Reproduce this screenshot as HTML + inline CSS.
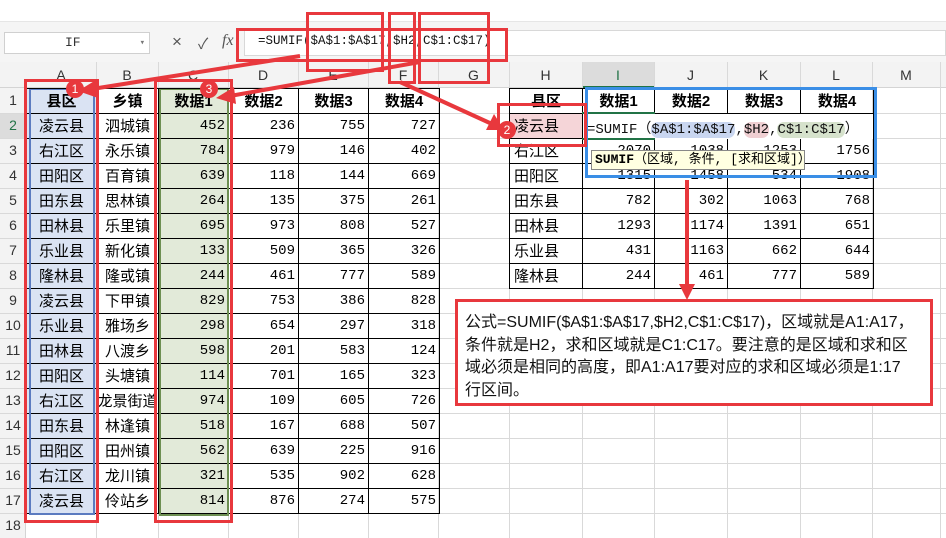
<!DOCTYPE html>
<html><head><meta charset="utf-8"><style>
*{margin:0;padding:0;box-sizing:border-box}
body{width:946px;height:538px;overflow:hidden;background:#fff;position:relative;font-family:"Liberation Sans","Noto Sans CJK SC",sans-serif}
.abs{position:absolute}
.vl{position:absolute;top:62px;bottom:0;width:1px;background:#d9d9d9}
.hl{position:absolute;left:0;right:0;height:1px;background:#d9d9d9}
table{border-collapse:collapse;position:absolute;table-layout:fixed}
td{border:1px solid #000;height:25px;font-size:15px;padding:0 4px;white-space:nowrap;overflow:hidden;line-height:23px}
td.n{text-align:right;font-family:"Liberation Mono","Noto Sans CJK SC",monospace;font-size:14px;padding-right:3px}
td.h{font-weight:bold;text-align:center;font-size:15px}
td.c{text-align:center}
.ba{background:#dae3f3}.gc{background:#e2ead9}
.rh{position:absolute;left:0;width:26px;text-align:center;font-size:14px;color:#333;height:25px;line-height:25px}
.ch{position:absolute;top:62px;height:26px;line-height:26px;text-align:center;font-size:14px;color:#333}
.rb{position:absolute;border:3px solid #e8383d}
.badge{position:absolute;width:18px;height:18px;border-radius:50%;background:#e8383d;color:#fff;font-size:12px;text-align:center;line-height:18px}
</style></head><body>
<div class="abs" style="left:0;top:0;width:946px;height:22px;background:#fff;border-bottom:1px solid #e6e6e6"></div>
<div class="abs" style="left:0;top:22px;width:946px;height:40px;background:#f5f5f5"></div>
<div class="abs" style="left:4px;top:32px;width:146px;height:22px;background:#fff;border:1px solid #d0d0d0;font-family:'Liberation Mono',monospace;font-size:13px;line-height:20px;padding-left:60px;color:#333">IF<span style="position:absolute;right:4px;font-size:9px;color:#777">▾</span></div>
<div class="abs" style="left:172px;top:32px;font-size:17px;color:#555">×</div>
<div class="abs" style="left:198px;top:33px;font-size:15px;color:#555">✓</div>
<div class="abs" style="left:222px;top:32px;font-size:16px;color:#555;font-style:italic;font-family:'Liberation Serif',serif">fx</div>
<div class="abs" style="left:244px;top:30px;width:702px;height:26px;background:#fff;border:1px solid #d8d8d8"></div>
<div class="abs" style="left:258px;top:34px;font-family:'Liberation Mono',monospace;font-size:12.5px;color:#111">=SUMIF($A$1:$A$17,$H2,C$1:C$17)</div>
<div class="abs" style="left:0;top:62px;width:946px;height:26px;background:#f3f3f3;border-bottom:1px solid #d4d4d4"></div>
<div class="abs" style="left:0;top:88px;width:26px;height:450px;background:#f3f3f3;border-right:1px solid #d4d4d4"></div>
<div class="abs" style="left:582px;top:62px;width:72px;height:26px;background:#dcdcdc;border-bottom:2px solid #217346"></div>
<div class="abs" style="left:0;top:114px;width:26px;height:25px;background:#dcdcdc"></div>
<div class="ch" style="left:26px;width:70px">A</div><div class="ch" style="left:96px;width:62px">B</div><div class="ch" style="left:158px;width:70px">C</div><div class="ch" style="left:228px;width:70px">D</div><div class="ch" style="left:298px;width:70px">E</div><div class="ch" style="left:368px;width:70px">F</div><div class="ch" style="left:438px;width:71px">G</div><div class="ch" style="left:509px;width:73px">H</div><div class="ch" style="left:582px;width:72px;color:#217346">I</div><div class="ch" style="left:654px;width:73px">J</div><div class="ch" style="left:727px;width:73px">K</div><div class="ch" style="left:800px;width:72px">L</div><div class="ch" style="left:872px;width:68px">M</div>
<div class="vl" style="left:96px"></div><div class="vl" style="left:158px"></div><div class="vl" style="left:228px"></div><div class="vl" style="left:298px"></div><div class="vl" style="left:368px"></div><div class="vl" style="left:438px"></div><div class="vl" style="left:509px"></div><div class="vl" style="left:582px"></div><div class="vl" style="left:654px"></div><div class="vl" style="left:727px"></div><div class="vl" style="left:800px"></div><div class="vl" style="left:872px"></div><div class="vl" style="left:940px"></div>
<div class="hl" style="top:113px"></div><div class="hl" style="top:138px"></div><div class="hl" style="top:163px"></div><div class="hl" style="top:188px"></div><div class="hl" style="top:213px"></div><div class="hl" style="top:238px"></div><div class="hl" style="top:263px"></div><div class="hl" style="top:288px"></div><div class="hl" style="top:313px"></div><div class="hl" style="top:338px"></div><div class="hl" style="top:363px"></div><div class="hl" style="top:388px"></div><div class="hl" style="top:413px"></div><div class="hl" style="top:438px"></div><div class="hl" style="top:463px"></div><div class="hl" style="top:488px"></div><div class="hl" style="top:513px"></div>
<div class="rh" style="top:88px">1</div><div class="rh" style="top:113px;color:#217346">2</div><div class="rh" style="top:138px">3</div><div class="rh" style="top:163px">4</div><div class="rh" style="top:188px">5</div><div class="rh" style="top:213px">6</div><div class="rh" style="top:238px">7</div><div class="rh" style="top:263px">8</div><div class="rh" style="top:288px">9</div><div class="rh" style="top:313px">10</div><div class="rh" style="top:338px">11</div><div class="rh" style="top:363px">12</div><div class="rh" style="top:388px">13</div><div class="rh" style="top:413px">14</div><div class="rh" style="top:438px">15</div><div class="rh" style="top:463px">16</div><div class="rh" style="top:488px">17</div><div class="rh" style="top:513px">18</div>
<table style="left:26px;top:88px;width:413px">
<colgroup><col style="width:70px"><col style="width:62px"><col style="width:70px"><col style="width:70px"><col style="width:70px"><col style="width:71px"></colgroup>
<tr><td class="h ba">县区</td><td class="h">乡镇</td><td class="h gc">数据1</td><td class="h">数据2</td><td class="h">数据3</td><td class="h">数据4</td></tr>
<tr><td class="c ba">凌云县</td><td class="c">泗城镇</td><td class="n gc">452</td><td class="n">236</td><td class="n">755</td><td class="n">727</td></tr>
<tr><td class="c ba">右江区</td><td class="c">永乐镇</td><td class="n gc">784</td><td class="n">979</td><td class="n">146</td><td class="n">402</td></tr>
<tr><td class="c ba">田阳区</td><td class="c">百育镇</td><td class="n gc">639</td><td class="n">118</td><td class="n">144</td><td class="n">669</td></tr>
<tr><td class="c ba">田东县</td><td class="c">思林镇</td><td class="n gc">264</td><td class="n">135</td><td class="n">375</td><td class="n">261</td></tr>
<tr><td class="c ba">田林县</td><td class="c">乐里镇</td><td class="n gc">695</td><td class="n">973</td><td class="n">808</td><td class="n">527</td></tr>
<tr><td class="c ba">乐业县</td><td class="c">新化镇</td><td class="n gc">133</td><td class="n">509</td><td class="n">365</td><td class="n">326</td></tr>
<tr><td class="c ba">隆林县</td><td class="c">隆或镇</td><td class="n gc">244</td><td class="n">461</td><td class="n">777</td><td class="n">589</td></tr>
<tr><td class="c ba">凌云县</td><td class="c">下甲镇</td><td class="n gc">829</td><td class="n">753</td><td class="n">386</td><td class="n">828</td></tr>
<tr><td class="c ba">乐业县</td><td class="c">雅场乡</td><td class="n gc">298</td><td class="n">654</td><td class="n">297</td><td class="n">318</td></tr>
<tr><td class="c ba">田林县</td><td class="c">八渡乡</td><td class="n gc">598</td><td class="n">201</td><td class="n">583</td><td class="n">124</td></tr>
<tr><td class="c ba">田阳区</td><td class="c">头塘镇</td><td class="n gc">114</td><td class="n">701</td><td class="n">165</td><td class="n">323</td></tr>
<tr><td class="c ba">右江区</td><td style="padding:0;text-align:center">龙景街道</td><td class="n gc">974</td><td class="n">109</td><td class="n">605</td><td class="n">726</td></tr>
<tr><td class="c ba">田东县</td><td class="c">林逢镇</td><td class="n gc">518</td><td class="n">167</td><td class="n">688</td><td class="n">507</td></tr>
<tr><td class="c ba">田阳区</td><td class="c">田州镇</td><td class="n gc">562</td><td class="n">639</td><td class="n">225</td><td class="n">916</td></tr>
<tr><td class="c ba">右江区</td><td class="c">龙川镇</td><td class="n gc">321</td><td class="n">535</td><td class="n">902</td><td class="n">628</td></tr>
<tr><td class="c ba">凌云县</td><td class="c">伶站乡</td><td class="n gc">814</td><td class="n">876</td><td class="n">274</td><td class="n">575</td></tr>
</table>
<div class="abs" style="left:29px;top:89px;width:66px;height:426px;border:2px solid #5b7bc0;border-top:1px solid #5b7bc0"></div>
<div class="abs" style="left:159px;top:89px;width:70px;height:427px;border:2px solid #6d8f52;border-top:1px solid #6d8f52"></div>
<table style="left:509px;top:88px;width:364px">
<colgroup><col style="width:73px"><col style="width:72px"><col style="width:73px"><col style="width:73px"><col style="width:73px"></colgroup>
<tr><td class="h">县区</td><td class="h">数据1</td><td class="h">数据2</td><td class="h">数据3</td><td class="h">数据4</td></tr>
<tr><td style="background:#f5d5d8">凌云县</td><td></td><td></td><td></td><td></td></tr>
<tr><td>右江区</td><td class="n">2070</td><td class="n">1038</td><td class="n">1253</td><td class="n">1756</td></tr>
<tr><td>田阳区</td><td class="n">1315</td><td class="n">1458</td><td class="n">534</td><td class="n">1908</td></tr>
<tr><td>田东县</td><td class="n">782</td><td class="n">302</td><td class="n">1063</td><td class="n">768</td></tr>
<tr><td>田林县</td><td class="n">1293</td><td class="n">1174</td><td class="n">1391</td><td class="n">651</td></tr>
<tr><td>乐业县</td><td class="n">431</td><td class="n">1163</td><td class="n">662</td><td class="n">644</td></tr>
<tr><td>隆林县</td><td class="n">244</td><td class="n">461</td><td class="n">777</td><td class="n">589</td></tr>
</table>
<div class="abs" style="left:583px;top:114px;width:290px;height:25px;background:#fff"></div>
<div class="abs" style="left:582px;top:112px;width:73px;height:2px;background:#217346"></div>
<div class="abs" style="left:582px;top:138px;width:73px;height:2px;background:#217346"></div>
<div class="abs" style="left:587px;top:118px;font-family:'Liberation Mono','Noto Sans CJK SC',monospace;font-size:14px;color:#111;white-space:nowrap">=SUMIF（<span style="background:#c9d6f0;border-radius:7px">$A$1:$A$17</span>,<span style="background:#efcfd2;border-radius:7px">$H2</span>,<span style="background:#d6e2cc;border-radius:7px">C$1:C$17</span>）</div>
<div class="abs" style="left:591px;top:150px;width:214px;height:20px;background:#ffffe1;border:1px solid #888;font-size:13px;line-height:18px;padding-left:3px;white-space:nowrap;font-family:'Liberation Mono','Noto Sans CJK SC',monospace"><b>SUMIF</b>（区域, 条件, [求和区域]）</div>
<div class="abs" style="left:585px;top:87px;width:292px;height:91px;border:3px solid #3a8ee6"></div>
<div class="rb" style="left:236px;top:28px;width:272px;height:34px"></div>
<div class="rb" style="left:306px;top:12px;width:78px;height:60px"></div>
<div class="rb" style="left:388px;top:12px;width:28px;height:72px"></div>
<div class="rb" style="left:418px;top:12px;width:72px;height:72px"></div>
<div class="rb" style="left:24px;top:79px;width:75px;height:444px"></div>
<div class="rb" style="left:154px;top:79px;width:79px;height:444px"></div>
<div class="rb" style="left:497px;top:103px;width:90px;height:44px"></div>
<div class="rb" style="left:455px;top:299px;width:478px;height:107px;background:#fff"></div>
<div class="abs" style="left:465px;top:312px;width:470px;font-size:16px;line-height:22.5px;color:#111;white-space:nowrap">公式=SUMIF($A$1:$A$17,$H2,C$1:C$17)，区域就是A1:A17，<br>条件就是H2，求和区域就是C1:C17。要注意的是区域和求和区<br>域必须是相同的高度，即A1:A17要对应的求和区域必须是1:17<br>行区间。</div>
<svg class="abs" style="left:0;top:0" width="946" height="538">
<g stroke="#e8383d" stroke-width="4" fill="#e8383d">
<line x1="300" y1="56" x2="92" y2="89"/><polygon points="78,91 96,80 98,98" stroke="none"/>
<line x1="420" y1="62" x2="230" y2="96"/><polygon points="216,98 234,87 236,104" stroke="none"/>
<line x1="400" y1="82" x2="492" y2="124"/><polygon points="504,130 486,130 494,114" stroke="none"/>
<line x1="687" y1="180" x2="687" y2="286"/><polygon points="687,300 679,284 695,284" stroke="none"/>
</g></svg>
<div class="badge" style="left:66px;top:80px">1</div>
<div class="badge" style="left:200px;top:80px">3</div>
<div class="badge" style="left:498px;top:121px">2</div>
</body></html>
